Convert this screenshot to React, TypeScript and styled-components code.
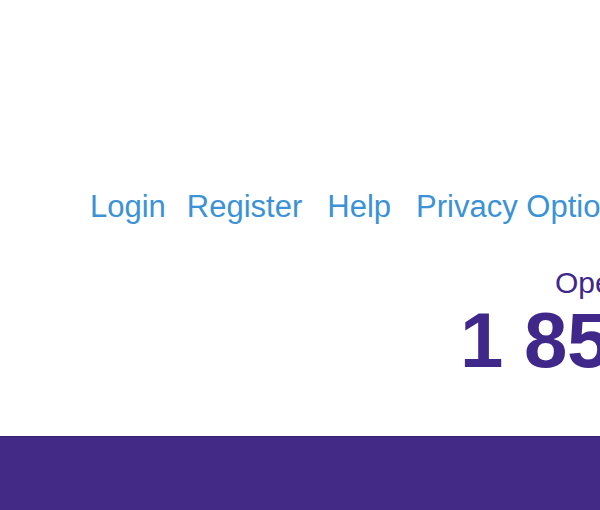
import styled, { createGlobalStyle } from 'styled-components';

const GlobalStyle = createGlobalStyle`
  html, body {
    margin: 0;
    padding: 0;
    background: #ffffff;
    font-family: "Liberation Sans", Arial, Helvetica, sans-serif;
  }
`;

const Page = styled.div`
  width: 600px;
  height: 510px;
  overflow: hidden;
  display: flex;
  flex-direction: column;
`;

const Header = styled.header`
  height: 436px;
  flex-shrink: 0;
  display: flex;
  flex-direction: column;
  padding: 189px 0 0 90px;
  box-sizing: border-box;
`;

const TopLinks = styled.nav`
  display: flex;
  white-space: nowrap;
  gap: 25px;
`;

const LinkGroup = styled.div`
  display: flex;
  gap: ${props => props.$gap}px;
`;

const TopLink = styled.a`
  font-size: 31px;
  line-height: 36px;
  color: #3b92d6;
  text-decoration: none;
  cursor: pointer;
`;

const Contact = styled.div`
  display: flex;
  flex-direction: column;
  align-items: flex-start;
  margin: 41px 0 0 370px;
  color: #40288a;
  white-space: nowrap;
`;

const Hours = styled.div`
  font-size: 30px;
  line-height: 34px;
  padding-left: 95px;
`;

const Phone = styled.div`
  font-size: 78px;
  font-weight: bold;
  line-height: 80px;
  letter-spacing: -0.5px;
`;

const Footer = styled.footer`
  flex: 1;
  background: #432a86;
  border-top: 1px solid #36206f;
`;

export default function App() {
  return (
    <Page>
      <GlobalStyle />
      <Header>
        <TopLinks>
          <LinkGroup $gap={21}>
            <TopLink>Login</TopLink>
            <TopLink>Register</TopLink>
          </LinkGroup>
          <LinkGroup $gap={25}>
            <TopLink>Help</TopLink>
            <TopLink>Privacy Options</TopLink>
          </LinkGroup>
        </TopLinks>
        <Contact>
          <Hours>Open 7 days, 8am – 10pm</Hours>
          <Phone>1 850 200 300</Phone>
        </Contact>
      </Header>
      <Footer />
    </Page>
  );
}
